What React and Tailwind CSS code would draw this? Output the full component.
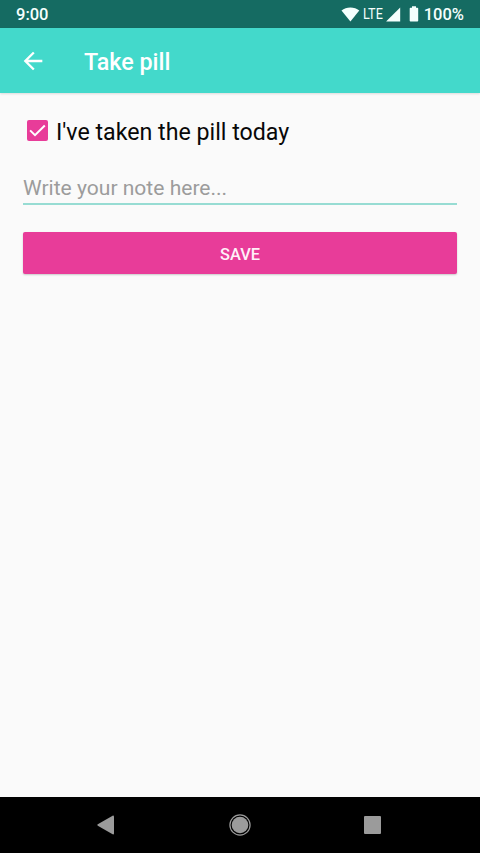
import React from "react";

function StatusBar() {
  return (
    <div className="flex h-[28px] items-center justify-between bg-[#156b62] pl-[16px] pr-[16px] text-[16.5px] font-medium leading-none text-[#f4fffd]">
      <span className="pt-[3px]">9:00</span>
      <div className="flex items-center">
        <svg width="19" height="15" viewBox="0 0 19 15" fill="currentColor">
          <path d="M9.400 14.500.5 3.400C3 1.400 6 .4 9.400.4s6.400 1 8.900 3z" />
        </svg>
        <span className="ml-[3.500px] inline-block w-[20px] origin-left scale-x-[0.87] whitespace-nowrap pt-[2px] text-[14.500px] font-normal">LTE</span>
        <svg className="ml-[3px]" width="15" height="15" viewBox="0 0 15 15" fill="currentColor">
          <path d="M.3 14.400V14.200L14.200.5v13.900z" />
        </svg>
        <svg className="ml-[8px]" width="10" height="16" viewBox="0 0 10 16" fill="currentColor">
          <path d="M3 .3h4v1.500h1.400c.5 0 .8.3.8.8v12.200c0 .5-.3.8-.8.8H1.500c-.5 0-.8-.3-.8-.8V2.600c0-.5.3-.8.8-.8H3z" />
        </svg>
        <span className="ml-[4.500px] pt-[3px]">100%</span>
      </div>
    </div>
  );
}

function AppBar() {
  return (
    <header className="flex h-[65px] shrink-0 items-center bg-[#43d9cb] pl-[19px] text-white shadow-[0_1px_2px_rgba(0,0,0,0.12)]">
      <button aria-label="Back" className="h-[28px] w-[28px]">
        <svg width="28" height="28" viewBox="0 0 24 24" fill="currentColor">
          <path d="M20 11H7.830l5.590-5.590L12 4l-8 8 8 8 1.410-1.410L7.830 13H20v-2z" />
        </svg>
      </button>
      <h1 className="ml-[37px] pt-[4px] text-[23.300px] font-medium leading-none">Take pill</h1>
    </header>
  );
}

function NavigationBar() {
  return (
    <nav className="flex h-[56px] items-center bg-black pl-[97px] text-[#9b9b9b]">
      <svg width="18" height="20" viewBox="0 0 18 20" fill="currentColor">
        <path d="M.8 9.300 15.600.7c.7-.4 1.400 0 1.400.8v17c0 .8-.7 1.200-1.400.8L.8 10.700c-.6-.4-.6-1 0-1.400z" />
      </svg>
      <svg className="ml-[113.500px]" width="22" height="22" viewBox="0 0 22 22">
        <circle cx="11" cy="11" r="10.100" fill="none" stroke="currentColor" strokeWidth="1.200" />
        <circle cx="11" cy="11" r="8.300" fill="currentColor" />
      </svg>
      <span className="ml-[113.500px] h-[18px] w-[17px] rounded-[1px] bg-[#9b9b9b]" />
    </nav>
  );
}

export default function App() {
  return (
    <div className="flex h-[853px] w-[480px] flex-col overflow-hidden bg-[#fafafa] font-[Roboto,sans-serif]">
      <StatusBar />
      <AppBar />
      <main className="flex flex-1 flex-col px-[23px] pt-[22px]">
        <label className="flex h-[31px] items-center pl-[4px]">
          <span className="flex h-[21px] w-[21px] items-center justify-center rounded-[2px] bg-[#e83c99]">
            <svg width="21" height="21" viewBox="0 0 21 21" fill="none" stroke="#fff" strokeWidth="2">
              <path d="M3.100 10.400 8 15.200 17.800 5.500" />
            </svg>
          </span>
          <span className="ml-[8px] pt-[4px] text-[23.200px] leading-none text-[#080808]">I've taken the pill today</span>
        </label>
        <div className="mt-[27px] h-[32px] border-b-2 border-[#97dcd3] text-[21.050px] leading-[30px] text-[#9c9c9c]">
          Write your note here...
        </div>
        <button className="mt-[27px] h-[42px] rounded-[2px] bg-[#e83c99] pt-[4px] text-[16.400px] font-medium leading-none text-[#fff0f8] shadow-[0_1px_2px_rgba(0,0,0,0.2)]">
          SAVE
        </button>
      </main>
      <NavigationBar />
    </div>
  );
}
